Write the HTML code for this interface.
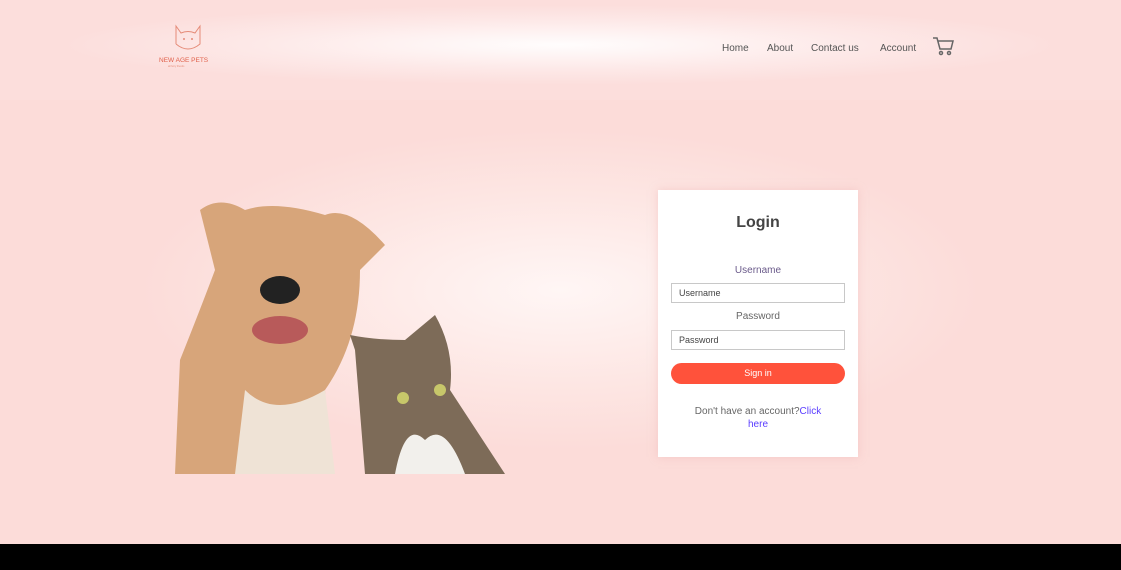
<!DOCTYPE html>
<html><head><style>
body{margin:0;width:1121px;height:570px;overflow:hidden;font-family:"Liberation Sans",sans-serif;position:relative;
background:radial-gradient(ellipse 420px 160px at 560px 290px,#fff6f5 0%,#fde6e3 60%,#fcdcd9 100%);}
.hdr{position:absolute;left:0;top:0;width:1121px;height:100px;background:radial-gradient(ellipse 500px 40px at 560px 45px,#fffdfd 0%,#fde9e8 60%,#fcdedc 100%);}
.nav{position:absolute;top:42px;font-size:10px;color:#555;}
.card{position:absolute;left:658px;top:190px;width:200px;height:267px;background:#fff;box-shadow:0 0 8px rgba(240,180,180,.5);text-align:center;}
.lbl{font-size:10px;color:#666;position:absolute;width:100%;}
.inp{position:absolute;left:13px;width:174px;height:20px;border:1px solid #c8c8c8;font-size:9px;color:#444;text-align:left;box-sizing:border-box;padding:4px 7px;}
.foot{position:absolute;left:0;top:544px;width:1121px;height:26px;background:#000;}
</style></head><body>
<div class="hdr"></div>
<svg style="position:absolute;left:158px;top:22px" width="60" height="46">
<path d="M18 22 L18 4 L23 11 Q30 8 37 11 L42 4 L42 22 Q30 32 18 22" fill="none" stroke="#e58b78" stroke-width="1"/>
<circle cx="26" cy="17" r="1" fill="#e58b78"/><circle cx="34" cy="17" r="1" fill="#e58b78"/>
<text x="1" y="40" font-size="6.5" fill="#e0604a" font-family="Liberation Sans">NEW AGE PETS</text>
<text x="10" y="45" font-size="2.5" fill="#e58b78">all furry friends</text>
</svg>
<div class="nav" style="left:722px;top:43px">Home</div>
<div class="nav" style="left:767px;top:43px">About</div>
<div class="nav" style="left:811px;top:43px">Contact us</div>
<div class="nav" style="left:880px;top:43px">Account</div>
<svg style="position:absolute;left:932px;top:36px" width="22" height="20" fill="none" stroke="#666" stroke-width="1.5">
<path d="M1 2h4l3 11h11l2-8H6"/><circle cx="9" cy="17" r="1.5"/><circle cx="17" cy="17" r="1.5"/></svg>
<svg style="position:absolute;left:175px;top:190px" width="333" height="284">
<path d="M0 284 L5 170 Q25 120 40 80 L25 20 Q45 5 70 20 Q100 10 150 25 Q175 15 210 55 L185 80 Q185 150 150 200 L155 284 Z" fill="#d7a57a"/>
<path d="M60 284 L70 200 Q100 230 150 200 L160 284Z" fill="#efe3d6"/>
<ellipse cx="105" cy="100" rx="20" ry="14" fill="#222"/>
<ellipse cx="105" cy="140" rx="28" ry="14" fill="#b85a5a"/>
<path d="M190 284 L180 160 L175 145 Q200 150 230 150 L260 125 Q280 160 275 200 L330 284Z" fill="#7d6b58"/>
<path d="M220 284 Q230 230 250 250 Q270 230 290 284Z" fill="#f2f0ec"/>
<circle cx="228" cy="208" r="6" fill="#c7c76a"/><circle cx="265" cy="200" r="6" fill="#c7c76a"/>
</svg>
<div class="card">
<div style="position:absolute;top:24px;width:100%;font-size:16px;font-weight:bold;color:#444">Login</div>
<div class="lbl" style="top:75px;color:#6a5a8a">Username</div>
<div class="inp" style="top:93px">Username</div>
<div class="lbl" style="top:121px">Password</div>
<div class="inp" style="top:140px">Password</div>
<div style="position:absolute;left:13px;top:173px;width:174px;height:21px;border-radius:11px;background:#ff523b;color:#fff;font-size:9px;line-height:21px">Sign in</div>
<div class="lbl" style="top:215px;line-height:13px;padding:0 30px;box-sizing:border-box">Don't have an account?<span style="color:#5a3dff">Click here</span></div>
</div>
<div class="foot"></div>
</body></html>
